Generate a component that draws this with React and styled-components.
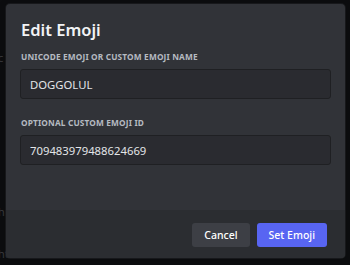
import React from 'react'
import styled, { createGlobalStyle } from 'styled-components'

const GlobalStyle = createGlobalStyle`
  html, body {
    margin: 0;
    padding: 0;
    background: #0c0d0f;
  }
  * {
    box-sizing: border-box;
  }
`

const Page = styled.div`
  position: relative;
  width: 350px;
  height: 265px;
  overflow: hidden;
  background: #0c0d0f;
  font-family: "Noto Sans", "Open Sans", sans-serif;
`

const BackText = styled.div`
  color: #3a3b3f;
  font-size: 11px;
  line-height: 12px;
  white-space: nowrap;
  margin-left: -2px;
  padding-top: ${p => p.$gap}px;
`

const Modal = styled.div`
  position: absolute;
  top: 4px;
  left: 6px;
  width: 339px;
  height: 254px;
  display: flex;
  flex-direction: column;
  background: #313338;
  border-radius: 4px;
  overflow: hidden;
  box-shadow: 0 0 0 1px rgba(32, 34, 37, 0.6), 0 2px 10px rgba(0, 0, 0, 0.2);
`

const Body = styled.div`
  flex: 1;
  padding: 16px 14px 0 14px;
  display: flex;
  flex-direction: column;
`

const Title = styled.h2`
  margin: 0 0 0 1px;
  font-size: 16.5px;
  line-height: 20px;
  font-weight: 600;
  color: #f2f3f5;
`

const Label = styled.label`
  display: block;
  margin: ${p => p.$top}px 0 7px 1px;
  font-size: 8.3px;
  line-height: 10px;
  font-weight: 700;
  text-transform: uppercase;
  letter-spacing: 0.15px;
  color: #b5bac1;
`

const Input = styled.input`
  width: 100%;
  height: 30px;
  padding: 0 9px;
  background: #2a2b30;
  border: 1px solid #1f2023;
  border-radius: 3px;
  color: #e3e5e8;
  font-family: inherit;
  font-size: 11.3px;
  outline: none;
`

const Footer = styled.div`
  height: 48px;
  background: #2b2d31;
  display: flex;
  align-items: center;
  justify-content: flex-end;
  gap: 7px;
  padding: 1px 18px 0 0;
`

const Button = styled.button`
  height: 24px;
  padding: 0 ${p => p.$pad}px;
  border: none;
  border-radius: 3px;
  background: ${p => (p.$primary ? '#5865f2' : '#3d3f45')};
  color: #ffffff;
  font-family: inherit;
  font-size: 10.5px;
  font-weight: 500;
  cursor: pointer;
`

export default function App() {
  return (
    <>
      <GlobalStyle />
      <Page>
        <BackText $gap={52}>c</BackText>
        <BackText $gap={142}>h</BackText>
        <BackText $gap={30}>ht from a board</BackText>
        <Modal>
          <Body>
            <Title>Edit Emoji</Title>
            <Label $top={12}>Unicode emoji or custom emoji name</Label>
            <Input defaultValue="DOGGOLUL" />
            <Label $top={19}>Optional custom emoji ID</Label>
            <Input defaultValue="709483979488624669" />
          </Body>
          <Footer>
            <Button $pad={12}>Cancel</Button>
            <Button $primary $pad={12}>Set Emoji</Button>
          </Footer>
        </Modal>
      </Page>
    </>
  )
}
